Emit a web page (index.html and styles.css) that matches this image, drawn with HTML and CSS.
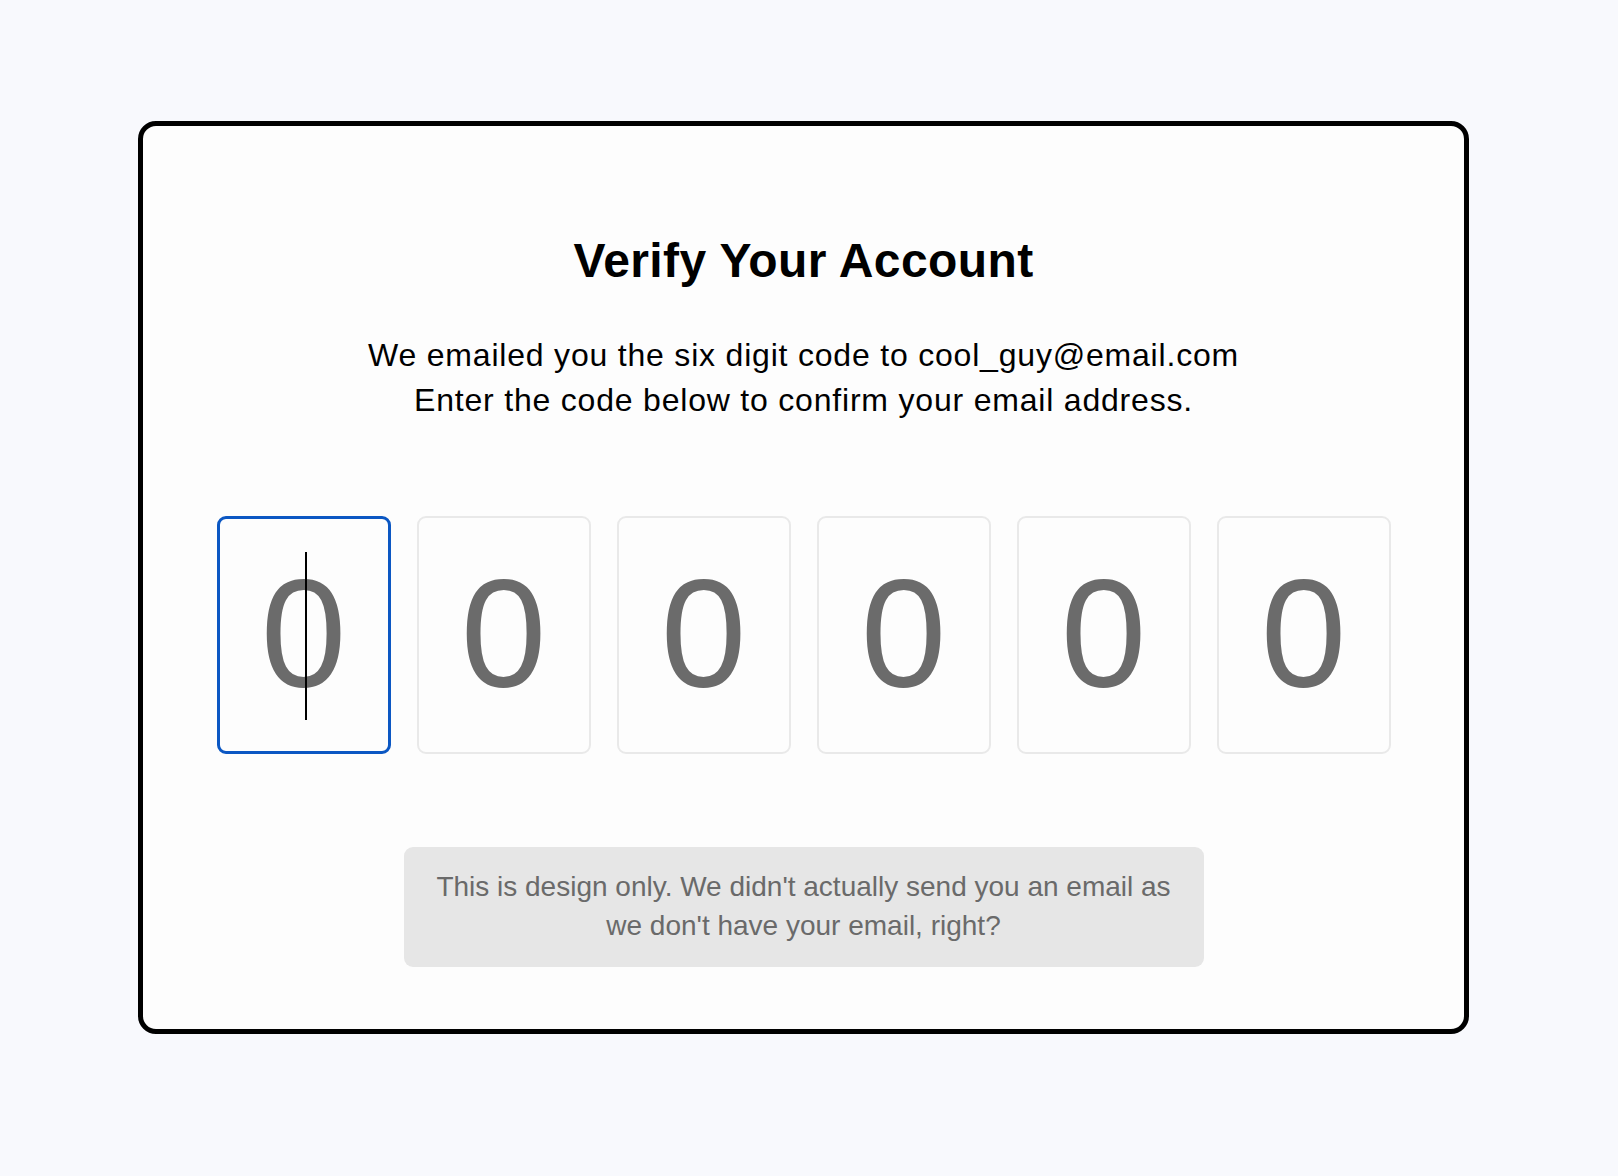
FILE: index.html
```html
<!DOCTYPE html>
<html lang="en">
<head>
<meta charset="utf-8">
<title>Verify Your Account</title>
<link rel="stylesheet" href="styles.css">
</head>
<body>
<main class="card">
  <h1 class="title">Verify Your Account</h1>
  <p class="subtitle">We emailed you the six digit code to cool_guy@email.com<br>Enter the code below to confirm your email address.</p>
  <div class="code-row">
    <div class="code-box is-active"><span class="digit">0</span><span class="caret"></span></div>
    <div class="code-box"><span class="digit">0</span></div>
    <div class="code-box"><span class="digit">0</span></div>
    <div class="code-box"><span class="digit">0</span></div>
    <div class="code-box"><span class="digit">0</span></div>
    <div class="code-box"><span class="digit">0</span></div>
  </div>
  <p class="note">This is design only. We didn't actually send you an email as we don't have your email, right?</p>
</main>
</body>
</html>
```
FILE: styles.css
```css
html, body {
  margin: 0;
  padding: 0;
}
body {
  background: #f8f9fd;
  font-family: "Liberation Sans", Arial, sans-serif;
  color: #000;
  min-height: 1176px;
  overflow: hidden;
}
.card {
  box-sizing: border-box;
  width: 1331px;
  margin: 121px 0 0 138px;
  padding: 107px 0 62px;
  background: #fdfdfd;
  border: 5px solid #000;
  border-radius: 18px;
  display: flex;
  flex-direction: column;
  align-items: center;
}
.title {
  margin: 0;
  font-size: 48px;
  line-height: 56px;
  font-weight: 700;
  letter-spacing: 0.4px;
  text-align: center;
}
.subtitle {
  margin: 44px 0 0;
  font-size: 32px;
  line-height: 45px;
  letter-spacing: 0.8px;
  text-align: center;
}
.code-row {
  margin-top: 93px;
  display: flex;
  gap: 26px;
}
.code-box {
  position: relative;
  box-sizing: border-box;
  width: 174px;
  height: 238px;
  border: 2px solid #e9e9e9;
  border-radius: 9px;
  background: #fdfdfd;
  display: flex;
  align-items: center;
  justify-content: center;
}
.code-box.is-active {
  border: 3px solid #0b57c3;
}
.digit {
  font-size: 154px;
  line-height: 1.15;
  color: #6b6b6b;
}
.caret {
  position: absolute;
  left: 85px;
  top: 33px;
  width: 2px;
  height: 168px;
  background: #000;
}
.note {
  box-sizing: border-box;
  width: 800px;
  margin: 93px 0 0;
  padding: 20px 30px 22px;
  background: #e6e6e6;
  border-radius: 9px;
  color: #6a6a6a;
  font-size: 28px;
  line-height: 39px;
  text-align: center;
}
```
